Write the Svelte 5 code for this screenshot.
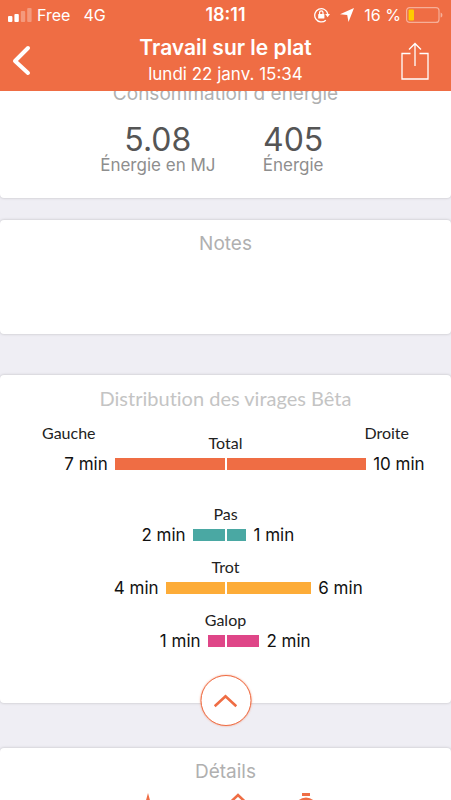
<script>
  const scale = 225;
  const total = { name: 'Total', color: '#ef6d44', left: 7, right: 10, l: 110, r: 140 };
  const gaits = [
    { name: 'Pas', color: '#4aa8a3', left: 2, right: 1, l: 32, r: 20 },
    { name: 'Trot', color: '#fdac38', left: 4, right: 6, l: 59, r: 85 },
    { name: 'Galop', color: '#df4688', left: 1, right: 2, l: 17, r: 33 }
  ];
  const pct = (n) => (n / scale) * 100 + '%';
</script>

{#snippet bars(row)}
  <div class="bars">
    <div class="side left">
      <span>{row.left} min</span>
      <i style="width: {pct(row.l)}; background: {row.color}"></i>
    </div>
    <div class="side">
      <i style="width: {pct(row.r)}; background: {row.color}"></i>
      <span>{row.right} min</span>
    </div>
  </div>
{/snippet}

<div class="screen">
  <header>
    <div class="status">
      <div class="carrier">
        <svg width="24" height="14" viewBox="0 0 24 14" fill="#fff">
          <rect x="0" y="8" width="4.4" height="6" rx="1" />
          <rect x="6.4" y="6" width="4.4" height="8" rx="1" />
          <rect x="12.8" y="3" width="4.4" height="11" rx="1" opacity=".3" />
          <rect x="19.2" y="0" width="4.4" height="14" rx="1" opacity=".3" />
        </svg>
        <span>Free</span><span class="net">4G</span>
      </div>
      <span class="clock">18:11</span>
      <div class="indicators">
        <svg width="16" height="16" viewBox="0 0 16 16" fill="none" stroke="#fff" stroke-width="1.3">
          <path d="M11.8 13.2A6.6 6.6 0 1 1 13.8 7" />
          <path d="M11.2 7h4.8l-2.4 3.2z" fill="#fff" stroke="none" />
          <rect x="4.2" y="7" width="6.2" height="4.6" rx=".6" fill="#fff" stroke="none" />
          <path d="M5.6 7.2V5.6a1.7 1.7 0 0 1 3.4 0v1.6" stroke-width="1.2" />
        </svg>
        <svg width="14" height="14" viewBox="0 0 14 14"><path d="M14 0 8.5 14 7.2 6.9 0 6.2z" fill="#fff" /></svg>
        <span>16 %</span>
        <svg class="battery" width="37" height="16" viewBox="0 0 37 16">
          <rect x=".6" y=".6" width="32.4" height="14.8" rx="3" fill="none" stroke="#fff" stroke-opacity=".45" stroke-width="1.2" />
          <rect x="2.6" y="2.6" width="5.4" height="10.8" rx="1" fill="#ffcc00" />
          <path d="M34.6 5.4c2.4.8 2.4 4.4 0 5.2z" fill="#fff" opacity=".45" />
        </svg>
      </div>
    </div>
    <div class="nav">
      <button aria-label="Retour">
        <svg width="20" height="32" viewBox="0 0 20 32" fill="none" stroke="#fff" stroke-width="4" stroke-linecap="round" stroke-linejoin="round"><path d="M16 3 3 16 16 28" /></svg>
      </button>
      <div class="heading">
        <h1>Travail sur le plat</h1>
        <p>lundi 22 janv. 15:34</p>
      </div>
      <button class="share" aria-label="Partager">
        <svg width="28" height="38" viewBox="0 0 28 38" fill="none" stroke="#fff" stroke-width="1.3"><path d="M9.5 11.5H1v25.5h26V11.5H18.5M14 24V1.5M8 7.5l6-6 6 6" /></svg>
      </button>
    </div>
  </header>

  <main>
    <section class="card energy">
      <h2>Consommation d'énergie</h2>
      <dl>
        <div><dd>5.08</dd><dt>Énergie en MJ</dt></div>
        <div><dd>405</dd><dt>Énergie</dt></div>
      </dl>
    </section>

    <section class="card notes">
      <h2>Notes</h2>
    </section>

    <section class="card turns">
      <h2>Distribution des virages Bêta</h2>
      <div class="legend">
        <span>Gauche</span>
        <h3>{total.name}</h3>
        <span>Droite</span>
      </div>
      {@render bars(total)}
      <div class="gaits">
        {#each gaits as gait}
          <div>
            <h3>{gait.name}</h3>
            {@render bars(gait)}
          </div>
        {/each}
      </div>
      <button class="collapse" aria-label="Réduire">
        <svg width="24" height="14" viewBox="0 0 24 14" fill="none" stroke="#ef6d44" stroke-width="2.6"><path d="M1.2 12.2 12 2.2 22.8 12.2" /></svg>
      </button>
    </section>

    <section class="card details">
      <h2>Détails</h2>
      <div class="icons">
        <svg width="28" height="28" viewBox="0 0 28 28" fill="#ef6d44"><path d="M14 0 17 11 28 14 17 17 14 28 11 17 0 14 11 11z" /></svg>
        <svg width="28" height="28" viewBox="0 0 28 28" fill="none" stroke="#ef6d44" stroke-width="2.6"><path d="M2 13.5 14 2 26 13.5 14 26z" /></svg>
        <svg width="28" height="28" viewBox="0 0 28 28" fill="none" stroke="#ef6d44" stroke-width="3"><path d="M10 1.5h8" /><circle cx="14" cy="16" r="10" /></svg>
      </div>
    </section>
  </main>
</div>

<style>
  :global(body) { margin: 0; }
  .screen {
    height: 100vh;
    display: flex;
    flex-direction: column;
    overflow: hidden;
    background: #efeef4;
    font-family: Inter, "Liberation Sans", sans-serif;
  }
  h1, h2, h3, p, dl, dd, dt { margin: 0; font-weight: 400; }
  svg { display: block; flex: none; }
  button { padding: 0; border: 0; background: none; cursor: pointer; }

  header { flex: none; background: #ef6d44; color: #fff; }
  .status {
    display: grid;
    grid-template-columns: 1fr auto 1fr;
    align-items: center;
    height: 30px;
    padding: 0 8px;
    font-size: 16px;
  }
  .carrier, .indicators { display: flex; align-items: center; }
  .carrier { gap: 5px; }
  .net { margin-left: 8px; }
  .clock { font-size: 18px; line-height: 20px; font-weight: 600; }
  .indicators { justify-content: flex-end; gap: 10px; }
  .battery { margin-left: -5px; }
  .nav {
    display: grid;
    grid-template-columns: 1fr auto 1fr;
    align-items: center;
    height: 61px;
    padding: 0 12px;
  }
  .nav button { justify-self: start; }
  .nav .share { justify-self: end; margin-right: 10px; }
  .heading { text-align: center; line-height: 26px; font-size: 17px; }
  h1 { font-size: 21px; font-weight: 600; }

  main { flex: 1; min-height: 0; overflow: hidden; }
  .card {
    position: relative;
    padding-top: 12px;
    background: #fff;
    border-radius: 4px;
    box-shadow: 0 0 3px rgba(0, 0, 0, .22);
  }
  h2 { font-size: 19px; line-height: 24px; text-align: center; color: #b0b0b0; }
  .energy { margin: -21px 0 22px; padding-bottom: 25px; }
  dl { display: flex; justify-content: center; padding-top: 17px; text-align: center; }
  dl div { display: flex; flex-direction: column; width: 30%; }
  dd { font-size: 32px; line-height: 34px; color: #555; }
  dt { font-size: 17px; line-height: 16px; color: #8e8e8e; white-space: nowrap; }
  .notes { min-height: 102px; margin-bottom: 41px; }

  .turns { padding: 11px 0 51px; margin-bottom: 45px; }
  .turns h2, .turns h3, .legend {
    font-family: Lato, "Open Sans", sans-serif;
    font-variant-ligatures: none;
  }
  .turns h2 { font-size: 20px; color: #c4c4c4; }
  h3, .legend { font-size: 16px; line-height: 20px; color: #222; text-align: center; }
  .legend {
    display: grid;
    grid-template-columns: 1fr auto 1fr;
    height: 30px;
    margin-top: 13px;
    padding: 0 42px;
  }
  .legend span:first-child { text-align: left; }
  .legend span:last-child { text-align: right; }
  .legend h3 { align-self: end; }
  .bars { display: grid; grid-template-columns: 1fr 1fr; gap: 2px; height: 22px; }
  .side { display: flex; align-items: center; gap: 7px; font-size: 17px; color: #111; white-space: nowrap; }
  .side.left { justify-content: flex-end; }
  .side i { height: 12px; }
  .gaits { display: flex; flex-direction: column; gap: 11px; padding-top: 29px; }
  .collapse {
    position: absolute;
    left: 50%;
    bottom: -23px;
    display: flex;
    align-items: center;
    justify-content: center;
    width: 51px;
    height: 51px;
    transform: translateX(-50%);
    border: 1px solid #ef6d44;
    border-radius: 50%;
    background: #fff;
    box-shadow: 0 0 2px rgba(239, 109, 68, .7);
  }
  .icons {
    display: grid;
    grid-template-columns: 90px 68px;
    grid-auto-columns: 28px;
    grid-auto-flow: column;
    justify-content: center;
    padding: 9px 0 20px 2px;
  }
</style>
